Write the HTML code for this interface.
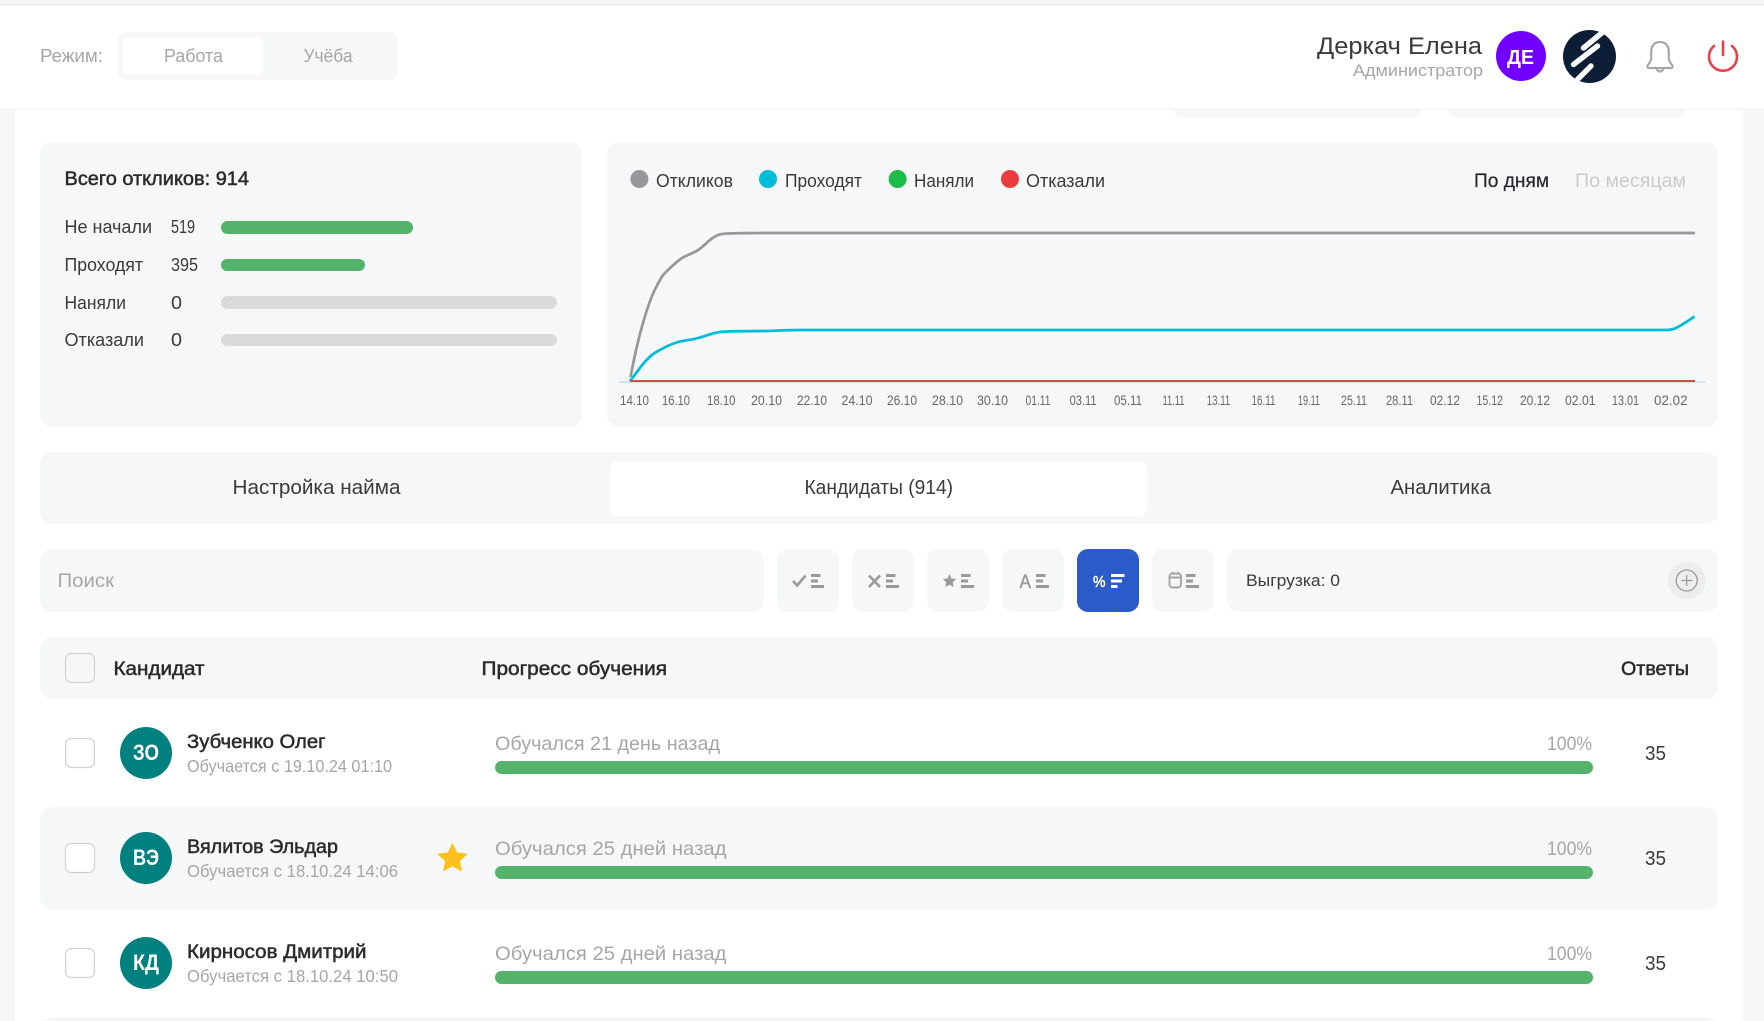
<!DOCTYPE html>
<html lang="ru">
<head>
<meta charset="utf-8">
<title>Кандидаты</title>
<style>
html,body{margin:0;padding:0;width:1764px;height:1021px;overflow:hidden;background:#fff}
svg{position:absolute;left:0;top:0;display:block}
text{font-family:"Liberation Sans","DejaVu Sans",sans-serif;white-space:pre}
.d{fill:#3a3a3c}
.g{fill:#a6a6a8}
.l{fill:#c9cacc}
.m{fill:#2b2b2d;stroke:#2b2b2d;stroke-width:.5px}
.x{fill:#66666a}
.bar{fill:#55b26b}
.box{fill:#f6f7f9}
.ln{fill:#999a9c}
</style>
</head>
<body>
<svg width="1764" height="1021" viewBox="0 0 1764 1021" xmlns="http://www.w3.org/2000/svg">
<!-- page background -->
<rect width="1764" height="1021" fill="#f6f7f9"/>
<rect x="15" y="108" width="1728" height="913" fill="#fff"/>
<rect x="0" y="0" width="1764" height="4" fill="#f4f4f5"/>
<rect x="0" y="4" width="1764" height="1" fill="#e9e9eb"/>
<!-- remnants under header -->
<rect x="1173" y="100" width="249" height="17" rx="9" fill="#f6f7f9"/>
<rect x="1448" y="100" width="238" height="17" rx="9" fill="#f6f7f9"/>
<!-- header -->
<rect x="0" y="5" width="1764" height="103" fill="#fff"/>
<rect x="0" y="108" width="1764" height="2" fill="#f6f7f9"/>
<text x="40" y="62" font-size="18" textLength="63" lengthAdjust="spacingAndGlyphs" class="g">Режим:</text>
<rect x="118" y="32" width="280" height="48" rx="8" class="box"/>
<rect x="123" y="37" width="140" height="38" rx="7" fill="#fff"/>
<text x="164" y="62" font-size="18" textLength="59" lengthAdjust="spacingAndGlyphs" class="g">Работа</text>
<text x="303.5" y="62" font-size="18" textLength="49" lengthAdjust="spacingAndGlyphs" class="g">Учёба</text>

<text x="1317" y="54" font-size="24" textLength="165" lengthAdjust="spacingAndGlyphs" class="d">Деркач Елена</text>
<text x="1353" y="76" font-size="17" textLength="130" lengthAdjust="spacingAndGlyphs" class="g">Администратор</text>
<circle cx="1521" cy="56" r="25" fill="#7000ff"/>
<text x="1507" y="64" font-size="20" font-weight="700" textLength="27" lengthAdjust="spacingAndGlyphs" fill="#fff">ДЕ</text>
<clipPath id="lg"><circle cx="1589.5" cy="56.5" r="26.5"/></clipPath>
<circle cx="1589.5" cy="56.5" r="26.5" fill="#0c1e35"/>
<g clip-path="url(#lg)" stroke="#fff" stroke-width="5.4" stroke-linecap="round" fill="none">
<path d="M1606 29.5L1583.5 48"/>
<path d="M1597.5 46L1573.5 64.5"/>
<path d="M1591 66L1572 85"/>
</g>
<!-- bell -->
<g fill="none" stroke="#a8a8aa" stroke-width="2.2" stroke-linecap="round" stroke-linejoin="round">
<path d="M1660 42c-5.5 0-8.8 4.2-8.8 9.500v6.500c0 3.500-2.200 5.500-3.600 7.500-.7 1.200 0 2.500 1.300 2.500h22.200c1.300 0 2-1.300 1.300-2.500-1.400-2-3.600-4-3.600-7.500V51.500c0-5.300-3.300-9.500-8.800-9.500z"/>
<path d="M1656.500 68.300c.6 2 2 3.200 3.500 3.200s2.900-1.200 3.500-3.200"/>
</g>
<!-- power -->
<g fill="none" stroke="#e8414a" stroke-width="2.6" stroke-linecap="round">
<path d="M1714 46a14 14 0 1 0 18 0" />
<path d="M1723 41.500V55"/>
</g>

<!-- card 1 -->
<rect x="40" y="142" width="542" height="285" rx="12" class="box"/>
<text x="64.500" y="185" font-size="19" textLength="184.500" lengthAdjust="spacingAndGlyphs" class="m">Всего откликов: 914</text>
<text x="64.500" y="233" font-size="18" textLength="87.500" lengthAdjust="spacingAndGlyphs" class="d">Не начали</text>
<text x="171" y="233" font-size="18" textLength="24" lengthAdjust="spacingAndGlyphs" class="d">519</text>
<rect x="221" y="221" width="192" height="13" rx="6.500" class="bar"/>
<text x="64.500" y="271" font-size="18" textLength="78.500" lengthAdjust="spacingAndGlyphs" class="d">Проходят</text>
<text x="171" y="271" font-size="18" textLength="27" lengthAdjust="spacingAndGlyphs" class="d">395</text>
<rect x="221" y="259" width="144" height="12" rx="6" class="bar"/>
<text x="64.500" y="309" font-size="18" textLength="61.500" lengthAdjust="spacingAndGlyphs" class="d">Наняли</text>
<text x="171" y="309" font-size="18" textLength="11" lengthAdjust="spacingAndGlyphs" class="d">0</text>
<rect x="221" y="296" width="336" height="13" rx="6.500" fill="#d9dadc"/>
<text x="64.500" y="346" font-size="18" textLength="79.500" lengthAdjust="spacingAndGlyphs" class="d">Отказали</text>
<text x="171" y="346" font-size="18" textLength="11" lengthAdjust="spacingAndGlyphs" class="d">0</text>
<rect x="221" y="334" width="336" height="12" rx="6" fill="#d9dadc"/>

<!-- card 2 -->
<rect x="607" y="142" width="1111" height="285" rx="12" class="box"/>
<circle cx="639.4" cy="179" r="9" fill="#96979a"/>
<text x="656" y="187" font-size="18" textLength="77" lengthAdjust="spacingAndGlyphs" class="d">Откликов</text>
<circle cx="768" cy="179" r="9" fill="#00bcd9"/>
<text x="785" y="187" font-size="18" textLength="77" lengthAdjust="spacingAndGlyphs" class="d">Проходят</text>
<circle cx="897.6" cy="179" r="9" fill="#1bbd47"/>
<text x="914" y="187" font-size="18" textLength="60" lengthAdjust="spacingAndGlyphs" class="d">Наняли</text>
<circle cx="1010" cy="179" r="9" fill="#ec3c3e"/>
<text x="1026" y="187" font-size="18" textLength="79" lengthAdjust="spacingAndGlyphs" class="d">Отказали</text>
<text x="1474" y="187" font-size="19" textLength="75" lengthAdjust="spacingAndGlyphs" fill="#26262a" stroke="#26262a" stroke-width=".2">По дням</text>
<text x="1575" y="187" font-size="19" textLength="111" lengthAdjust="spacingAndGlyphs" class="l">По месяцам</text>

<!-- chart -->
<rect x="619" y="381" width="1086" height="2" fill="#d9e0f0"/>
<path d="M630.500 377C635 353 640 332 646 313C651 297 655 288 663 275C671 267 676 262 682 258C689 254 694 253 698 250C703 247 706 243 710 240C714 237 716 235 722 234C730 233 745 233 800 233L1695 233" fill="none" stroke="#96979a" stroke-width="2.700"/>
<path d="M630 381C635 375 639 369 643 364C648 358 652 354 658 351C665 347 671 344 678 342C685 340 692 340 698 338C706 336 712 333 720 332C730 331 745 331 767 331C780 330.500 790 330 800 330L1665 330C1670 330 1673 329.500 1676 328C1682 325 1688 321 1694.500 316.500" fill="none" stroke="#00bcd9" stroke-width="2.700"/>
<rect x="630" y="380" width="1065" height="2" fill="#c0583f"/>
<g font-size="14" class="x">
<text x="620" y="405" textLength="29" lengthAdjust="spacingAndGlyphs">14.10</text>
<text x="662" y="405" textLength="28" lengthAdjust="spacingAndGlyphs">16.10</text>
<text x="707" y="405" textLength="28.500" lengthAdjust="spacingAndGlyphs">18.10</text>
<text x="751" y="405" textLength="31" lengthAdjust="spacingAndGlyphs">20.10</text>
<text x="797" y="405" textLength="30" lengthAdjust="spacingAndGlyphs">22.10</text>
<text x="841.500" y="405" textLength="31" lengthAdjust="spacingAndGlyphs">24.10</text>
<text x="887" y="405" textLength="30" lengthAdjust="spacingAndGlyphs">26.10</text>
<text x="932" y="405" textLength="31" lengthAdjust="spacingAndGlyphs">28.10</text>
<text x="977" y="405" textLength="31" lengthAdjust="spacingAndGlyphs">30.10</text>
<text x="1025.500" y="405" textLength="25" lengthAdjust="spacingAndGlyphs">01.11</text>
<text x="1069.600" y="405" textLength="27" lengthAdjust="spacingAndGlyphs">03.11</text>
<text x="1114" y="405" textLength="28" lengthAdjust="spacingAndGlyphs">05.11</text>
<text x="1162.500" y="405" textLength="22" lengthAdjust="spacingAndGlyphs">11.11</text>
<text x="1206.800" y="405" textLength="23.500" lengthAdjust="spacingAndGlyphs">13.11</text>
<text x="1251.500" y="405" textLength="24" lengthAdjust="spacingAndGlyphs">16.11</text>
<text x="1298" y="405" textLength="22" lengthAdjust="spacingAndGlyphs">19.11</text>
<text x="1341" y="405" textLength="26" lengthAdjust="spacingAndGlyphs">25.11</text>
<text x="1386" y="405" textLength="27" lengthAdjust="spacingAndGlyphs">28.11</text>
<text x="1430" y="405" textLength="30" lengthAdjust="spacingAndGlyphs">02.12</text>
<text x="1476.500" y="405" textLength="26.500" lengthAdjust="spacingAndGlyphs">15.12</text>
<text x="1520" y="405" textLength="30" lengthAdjust="spacingAndGlyphs">20.12</text>
<text x="1565" y="405" textLength="30.600" lengthAdjust="spacingAndGlyphs">02.01</text>
<text x="1612" y="405" textLength="27" lengthAdjust="spacingAndGlyphs">13.01</text>
<text x="1654" y="405" textLength="33.600" lengthAdjust="spacingAndGlyphs">02.02</text>
</g>

<!-- tabs -->
<rect x="40" y="452" width="1678" height="72" rx="12" class="box"/>
<rect x="610" y="461" width="537.500" height="55" rx="8" fill="#fff"/>
<text x="232.500" y="494" font-size="20" textLength="168" lengthAdjust="spacingAndGlyphs" class="d">Настройка найма</text>
<text x="804.500" y="494" font-size="20" textLength="148.500" lengthAdjust="spacingAndGlyphs" class="d">Кандидаты (914)</text>
<text x="1390.500" y="494" font-size="20" textLength="100.500" lengthAdjust="spacingAndGlyphs" class="d">Аналитика</text>

<!-- filter row -->
<rect x="40" y="549" width="724" height="63" rx="12" class="box"/>
<text x="57.500" y="587" font-size="19" textLength="56.500" lengthAdjust="spacingAndGlyphs" class="g">Поиск</text>
<rect x="777" y="549" width="62" height="63" rx="11" class="box"/>
<rect x="852" y="549" width="62" height="63" rx="11" class="box"/>
<rect x="927" y="549" width="62" height="63" rx="11" class="box"/>
<rect x="1002" y="549" width="62" height="63" rx="11" class="box"/>
<rect x="1077" y="549" width="62" height="63" rx="11" fill="#2a5bc8"/>
<rect x="1152" y="549" width="62" height="63" rx="11" class="box"/>
<rect x="1227" y="549" width="491" height="63" rx="11" class="box"/>
<!-- check -->
<path d="M793 581l4.200 4.500L805.500 575.500" fill="none" stroke="#999a9c" stroke-width="2.600"/>
<g class="ln"><rect x="811" y="574" width="9.500" height="3"/><rect x="811" y="579.500" width="7" height="3"/><rect x="811" y="585" width="13" height="3"/></g>
<!-- x -->
<path d="M869 575.500l11 11.500M880 575.500l-11 11.500" fill="none" stroke="#999a9c" stroke-width="2.600"/>
<g class="ln"><rect x="886" y="574" width="9.500" height="3"/><rect x="886" y="579.500" width="7" height="3"/><rect x="886" y="585" width="13" height="3"/></g>
<!-- star -->
<path d="M949.500 574l2 4.500 4.800.5-3.600 3.300 1 4.800-4.200-2.500-4.200 2.500 1-4.800-3.600-3.300 4.800-.5z" fill="#999a9c"/>
<g class="ln"><rect x="961" y="574" width="9.500" height="3"/><rect x="961" y="579.500" width="7" height="3"/><rect x="961" y="585" width="13" height="3"/></g>
<!-- A -->
<text x="1019.500" y="588" font-size="19" textLength="11.500" lengthAdjust="spacingAndGlyphs" fill="#999a9c" stroke="#999a9c" stroke-width=".5">A</text>
<g class="ln"><rect x="1036" y="574" width="9.500" height="3"/><rect x="1036" y="579.500" width="7" height="3"/><rect x="1036" y="585" width="13" height="3"/></g>
<!-- percent -->
<text x="1093" y="587" font-size="16" textLength="12.500" lengthAdjust="spacingAndGlyphs" fill="#fff" stroke="#fff" stroke-width=".5">%</text>
<g fill="#fff"><rect x="1111" y="574" width="13.500" height="3"/><rect x="1111" y="579.500" width="11" height="3"/><rect x="1111" y="585" width="6.500" height="3"/></g>
<!-- calendar -->
<g fill="none" stroke="#a2a3a5" stroke-width="1.900"><rect x="1169.500" y="573.500" width="11.500" height="14" rx="3"/><path d="M1169.500 577.500h11.500M1172.500 572v2.500M1178 572v2.500"/></g>
<g class="ln"><rect x="1186" y="574" width="9.500" height="3"/><rect x="1186" y="579.500" width="7" height="3"/><rect x="1186" y="585" width="13" height="3"/></g>

<text x="1246" y="586" font-size="17" textLength="94" lengthAdjust="spacingAndGlyphs" class="d">Выгрузка: 0</text>
<circle cx="1686.700" cy="580.500" r="19" fill="#ededef"/>
<circle cx="1686.700" cy="580.500" r="10.500" fill="none" stroke="#98989a" stroke-width="1.300"/>
<path d="M1686.700 575v11M1681.200 580.500h11" fill="none" stroke="#98989a" stroke-width="1.200"/>

<!-- table header -->
<rect x="40" y="637" width="1678" height="62" rx="12" class="box"/>
<rect x="65.500" y="653.500" width="29" height="29" rx="6" fill="none" stroke="#cfd0d2" stroke-width="1.200"/>
<text x="113.500" y="675" font-size="19" textLength="91" lengthAdjust="spacingAndGlyphs" class="m">Кандидат</text>
<text x="481.500" y="675" font-size="19" textLength="185.500" lengthAdjust="spacingAndGlyphs" class="m">Прогресс обучения</text>
<text x="1621" y="675" font-size="19" textLength="68" lengthAdjust="spacingAndGlyphs" class="m">Ответы</text>

<!-- row 1 -->
<rect x="65.500" y="738.500" width="29" height="29" rx="6" fill="#fff" stroke="#cfd0d2" stroke-width="1.200"/>
<circle cx="146" cy="753" r="26" fill="#00807f"/>
<text x="133" y="760" font-size="22" font-weight="700" textLength="26" lengthAdjust="spacingAndGlyphs" fill="#fff">ЗО</text>
<text x="187" y="748" font-size="19" textLength="138.500" lengthAdjust="spacingAndGlyphs" class="m">Зубченко Олег</text>
<text x="187" y="772" font-size="17.500" textLength="205" lengthAdjust="spacingAndGlyphs" class="g">Обучается с 19.10.24 01:10</text>
<text x="495" y="750" font-size="19.500" textLength="225" lengthAdjust="spacingAndGlyphs" class="g">Обучался 21 день назад</text>
<text x="1547" y="750" font-size="19.500" textLength="45" lengthAdjust="spacingAndGlyphs" class="g">100%</text>
<rect x="495" y="761" width="1098" height="13" rx="6.500" class="bar"/>
<text x="1645" y="760" font-size="20" textLength="21" lengthAdjust="spacingAndGlyphs" class="d">35</text>

<!-- row 2 -->
<rect x="40" y="807" width="1678" height="102" rx="12" class="box"/>
<rect x="65.500" y="843.500" width="29" height="29" rx="6" fill="#fff" stroke="#cfd0d2" stroke-width="1.200"/>
<circle cx="146" cy="858" r="26" fill="#00807f"/>
<text x="133" y="865" font-size="22" font-weight="700" textLength="26" lengthAdjust="spacingAndGlyphs" fill="#fff">ВЭ</text>
<text x="187" y="853" font-size="19" textLength="151" lengthAdjust="spacingAndGlyphs" class="m">Вялитов Эльдар</text>
<text x="187" y="877" font-size="17.500" textLength="211" lengthAdjust="spacingAndGlyphs" class="g">Обучается с 18.10.24 14:06</text>
<path d="M452.500 844l4.200 9 9.800 1.200-7.200 6.700 1.900 9.600-8.700-4.800-8.700 4.800 1.900-9.600-7.200-6.700 9.800-1.200z" fill="#fdc01c" stroke="#fdc01c" stroke-width="1.200" stroke-linejoin="round"/>
<text x="495" y="855" font-size="19.500" textLength="231.500" lengthAdjust="spacingAndGlyphs" class="g">Обучался 25 дней назад</text>
<text x="1547" y="855" font-size="19.500" textLength="45" lengthAdjust="spacingAndGlyphs" class="g">100%</text>
<rect x="495" y="866" width="1098" height="13" rx="6.500" class="bar"/>
<text x="1645" y="865" font-size="20" textLength="21" lengthAdjust="spacingAndGlyphs" class="d">35</text>

<!-- row 3 -->
<rect x="65.500" y="948.500" width="29" height="29" rx="6" fill="#fff" stroke="#cfd0d2" stroke-width="1.200"/>
<circle cx="146" cy="963" r="26" fill="#00807f"/>
<text x="133" y="970" font-size="22" font-weight="700" textLength="26" lengthAdjust="spacingAndGlyphs" fill="#fff">КД</text>
<text x="187" y="958" font-size="19" textLength="179.500" lengthAdjust="spacingAndGlyphs" class="m">Кирносов Дмитрий</text>
<text x="187" y="982" font-size="17.500" textLength="211" lengthAdjust="spacingAndGlyphs" class="g">Обучается с 18.10.24 10:50</text>
<text x="495" y="960" font-size="19.500" textLength="231.500" lengthAdjust="spacingAndGlyphs" class="g">Обучался 25 дней назад</text>
<text x="1547" y="960" font-size="19.500" textLength="45" lengthAdjust="spacingAndGlyphs" class="g">100%</text>
<rect x="495" y="971" width="1098" height="13" rx="6.500" class="bar"/>
<text x="1645" y="970" font-size="20" textLength="21" lengthAdjust="spacingAndGlyphs" class="d">35</text>

<!-- row 4 top -->
<rect x="40" y="1017" width="1678" height="20" rx="12" class="box"/>
</svg>
</body>
</html>
